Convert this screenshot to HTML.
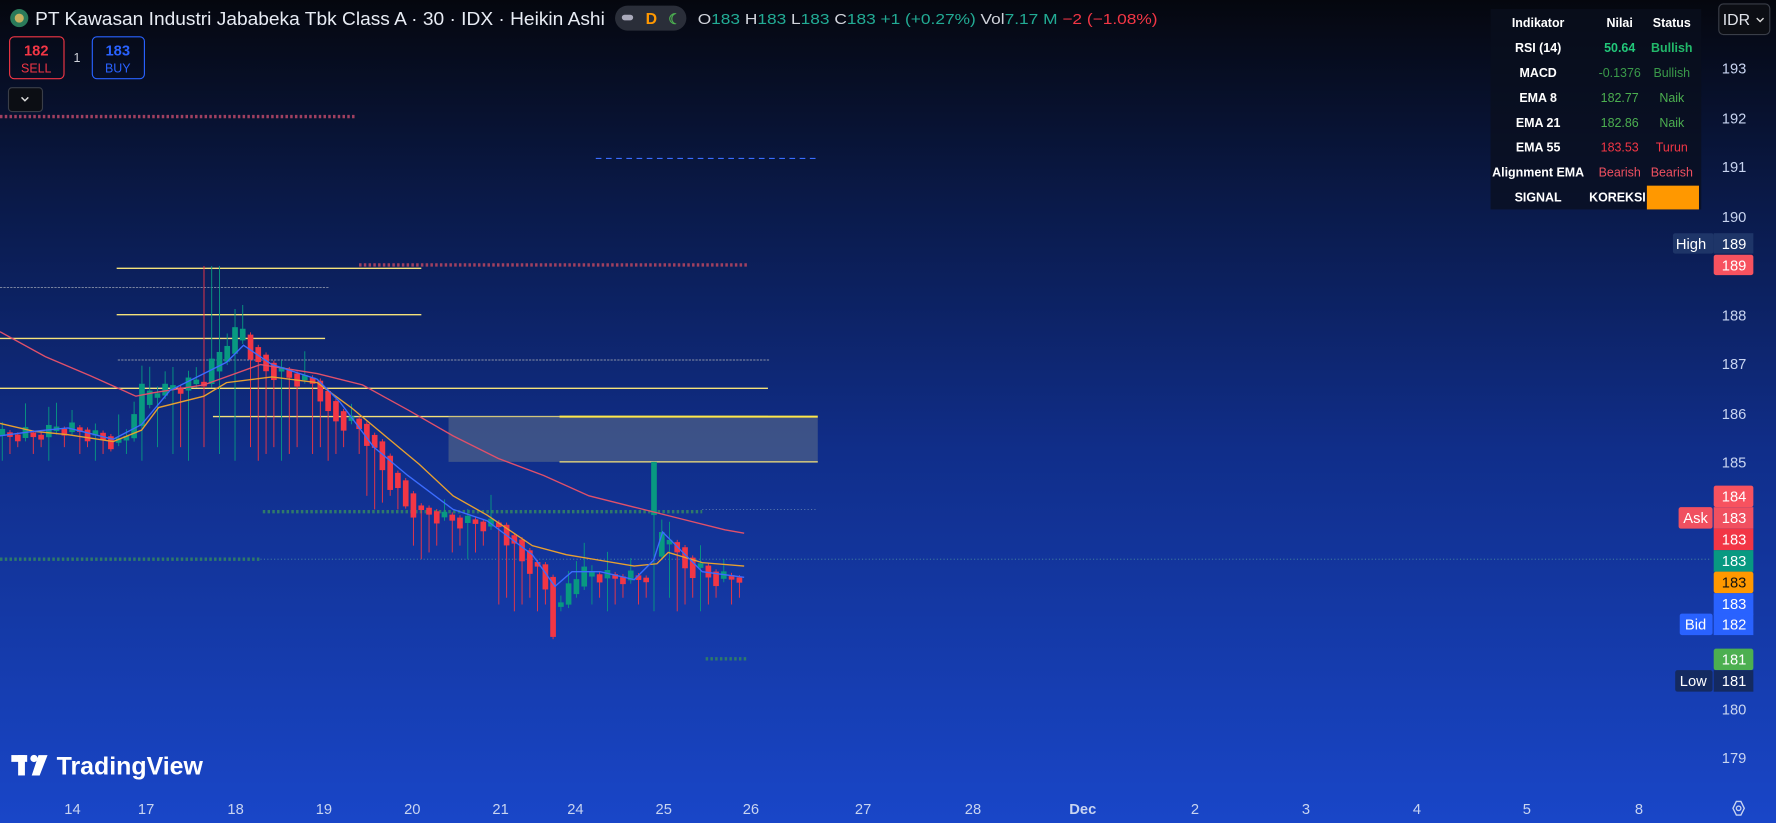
<!DOCTYPE html>
<html><head><meta charset="utf-8"><style>
html,body{margin:0;padding:0;width:1776px;height:823px;overflow:hidden;background:#0a1230}
svg{display:block}
text{font-family:"Liberation Sans",sans-serif}
</style></head><body>
<svg id="s" width="1776" height="823" viewBox="0 0 1568 727" preserveAspectRatio="none" xmlns="http://www.w3.org/2000/svg">
<defs>
<linearGradient id="bg" x1="0" y1="0" x2="0" y2="1">
<stop offset="0" stop-color="#05070e"/>
<stop offset="0.25" stop-color="#0a1a4a"/>
<stop offset="0.55" stop-color="#102e8a"/>
<stop offset="1" stop-color="#1946c8"/>
</linearGradient>
</defs>
<rect width="1568" height="727" fill="url(#bg)"/>
<line x1="0" y1="103" x2="313" y2="103" stroke="#a04060" stroke-width="3" stroke-dasharray="2.2 2"/>
<line x1="317" y1="234" x2="660" y2="234" stroke="#a04060" stroke-width="3" stroke-dasharray="2.2 2"/>
<line x1="526" y1="140" x2="722" y2="140" stroke="#3a6cff" stroke-width="1" stroke-dasharray="5 4"/>
<line x1="103" y1="237" x2="372" y2="237" stroke="#f5e27a" stroke-width="1.2"/>
<line x1="0" y1="254" x2="290" y2="254" stroke="#8890a8" stroke-width="0.8" stroke-dasharray="2 1"/>
<line x1="103" y1="278" x2="372" y2="278" stroke="#f5e27a" stroke-width="1.2"/>
<line x1="0" y1="299" x2="287" y2="299" stroke="#f5e27a" stroke-width="1.2"/>
<line x1="104" y1="318" x2="680" y2="318" stroke="#8890a8" stroke-width="0.8" stroke-dasharray="2 1"/>
<line x1="0" y1="343" x2="678" y2="343" stroke="#f5e27a" stroke-width="1.2"/>
<line x1="188" y1="368" x2="678" y2="368" stroke="#f5e27a" stroke-width="1.2"/>
<rect x="396" y="368" width="326" height="40" fill="#5a6a88" opacity="0.6"/>
<line x1="494" y1="368" x2="722" y2="368" stroke="#ffe84a" stroke-width="1.8"/>
<line x1="494" y1="408" x2="722" y2="408" stroke="#f5e27a" stroke-width="1.2"/>
<line x1="232" y1="452" x2="620" y2="452" stroke="#2f7a6a" stroke-width="3" stroke-dasharray="2.2 2"/>
<line x1="620" y1="450" x2="722" y2="450" stroke="#6080b0" stroke-width="0.8" stroke-dasharray="1 2"/>
<line x1="0" y1="494" x2="230" y2="494" stroke="#2f7a6a" stroke-width="3" stroke-dasharray="2.2 2"/>
<line x1="230" y1="494" x2="1510" y2="494" stroke="#4a8aa0" stroke-width="0.8" stroke-dasharray="1 2"/>
<line x1="623" y1="582" x2="660" y2="582" stroke="#2f7a6a" stroke-width="3" stroke-dasharray="2.2 2"/>
<g id="candles"></g>
<polyline fill="none" stroke="#e0506a" stroke-width="1.2" points="0,293 40,315 80,332 120,350 135,347 180,340 230,322 280,330 320,340 360,362 400,385 440,405 480,420 520,438 560,448 600,458 640,468 657,471"/>
<polyline fill="none" stroke="#e8a030" stroke-width="1.2" points="0,374 30,381 60,384 100,390 125,380 140,360 180,350 200,338 240,333 280,338 310,360 340,385 370,410 400,438 430,455 470,482 500,490 530,495 560,500 580,498 590,488 620,497 657,500"/>
<polyline fill="none" stroke="#3b6cff" stroke-width="1.2" points="0,385 30,381 60,378 100,388 125,375 150,345 200,320 215,305 240,322 280,335 300,355 330,395 360,420 400,450 430,460 470,490 490,518 505,505 530,505 560,512 577,495 585,470 600,485 620,505 657,510"/>
<g font-size="13" fill="#c8d4f0" text-anchor="middle">
<text x="1531" y="65">193</text><text x="1531" y="109">192</text><text x="1531" y="152">191</text><text x="1531" y="196">190</text>
<text x="1531" y="283">188</text><text x="1531" y="326">187</text><text x="1531" y="370">186</text><text x="1531" y="413">185</text>
<text x="1531" y="631">180</text><text x="1531" y="674">179</text>
</g>
<g font-size="13" text-anchor="middle">
<rect x="1477" y="206" width="36" height="18" rx="2" fill="#1e3568"/><text x="1493" y="220" fill="#fff">High</text>
<rect x="1513" y="206" width="35" height="18" fill="#1e3568"/><text x="1531" y="220" fill="#fff">189</text>
<rect x="1513" y="225" width="35" height="18" rx="2" fill="#f7525f"/><text x="1531" y="239" fill="#fff">189</text>
<rect x="1513" y="429" width="35" height="19" rx="2" fill="#f7525f"/><text x="1531" y="443" fill="#fff">184</text>
<rect x="1482" y="448" width="30" height="19" rx="2" fill="#f05060"/><text x="1497" y="462" fill="#fff">Ask</text>
<rect x="1513" y="448" width="35" height="19" fill="#f05060"/><text x="1531" y="462" fill="#fff">183</text>
<rect x="1513" y="467" width="35" height="19" fill="#f23645"/><text x="1531" y="481" fill="#fff">183</text>
<rect x="1513" y="486" width="35" height="19" fill="#089981"/><text x="1531" y="500" fill="#fff">183</text>
<rect x="1513" y="505" width="35" height="19" rx="2" fill="#ff9800"/><text x="1531" y="519" fill="#111">183</text>
<rect x="1513" y="524" width="35" height="19" fill="#2962ff"/><text x="1531" y="538" fill="#fff">183</text>
<rect x="1483" y="542" width="29" height="19" rx="2" fill="#2962ff"/><text x="1497" y="556" fill="#fff">Bid</text>
<rect x="1513" y="542" width="35" height="19" fill="#2962ff"/><text x="1531" y="556" fill="#fff">182</text>
<rect x="1513" y="573" width="35" height="19" rx="2" fill="#4caf50"/><text x="1531" y="587" fill="#fff">181</text>
<rect x="1479" y="592" width="33" height="19" rx="2" fill="#142a60"/><text x="1495" y="606" fill="#fff">Low</text>
<rect x="1513" y="592" width="35" height="19" fill="#142a60"/><text x="1531" y="606" fill="#fff">181</text>
</g>
<g fill="none" stroke="#c8d4f0" stroke-width="1.2"><polygon points="1533,708 1537,708 1540,714 1537,720 1533,720 1530,714"/><circle cx="1535" cy="714" r="2"/></g>
<g font-size="13" fill="#c8d4f0" text-anchor="middle">
<text x="64" y="719">14</text><text x="129" y="719">17</text><text x="208" y="719">18</text><text x="286" y="719">19</text><text x="364" y="719">20</text><text x="442" y="719">21</text><text x="508" y="719">24</text><text x="586" y="719">25</text><text x="663" y="719">26</text><text x="762" y="719">27</text><text x="859" y="719">28</text><text x="956" y="719" font-weight="bold">Dec</text><text x="1055" y="719">2</text><text x="1153" y="719">3</text><text x="1251" y="719">4</text><text x="1348" y="719">5</text><text x="1447" y="719">8</text>
</g>
<circle cx="17" cy="16" r="8" fill="#2a7a5a"/><circle cx="17" cy="16" r="4" fill="#c8b060"/>
<text x="31" y="22" font-size="16" fill="#e8ecf4" textLength="503" lengthAdjust="spacingAndGlyphs">PT Kawasan Industri Jababeka Tbk Class A · 30 · IDX · Heikin Ashi</text>
<rect x="543" y="5" width="63" height="22" rx="11" fill="#2a2e39"/>
<rect x="549" y="13" width="10" height="5" rx="2.5" fill="#aab"/>
<text x="570" y="21" font-size="14" fill="#ff9800" font-weight="bold">D</text>
<text x="590" y="21" font-size="13" fill="#4caf50" font-weight="bold">☾</text>
<text x="616" y="21" font-size="13" fill="#d1d4dc" textLength="406" lengthAdjust="spacingAndGlyphs">O<tspan fill="#22ab94">183</tspan> H<tspan fill="#22ab94">183</tspan> L<tspan fill="#22ab94">183</tspan> C<tspan fill="#22ab94">183 +1 (+0.27%)</tspan> <tspan fill="#d1d4dc">Vol</tspan><tspan fill="#22ab94">7.17 M</tspan> <tspan fill="#f23645">−2 (−1.08%)</tspan></text>
<rect x="8.5" y="32.5" width="48" height="37" rx="4" fill="none" stroke="#f23645"/>
<text x="32" y="49" font-size="13" fill="#f23645" text-anchor="middle" font-weight="bold">182</text><text x="32" y="64" font-size="11" fill="#f23645" text-anchor="middle">SELL</text>
<text x="68" y="55" font-size="11" fill="#d1d4dc" text-anchor="middle">1</text>
<rect x="81.5" y="32.5" width="46" height="37" rx="4" fill="none" stroke="#2962ff"/>
<text x="104" y="49" font-size="13" fill="#2962ff" text-anchor="middle" font-weight="bold">183</text><text x="104" y="64" font-size="11" fill="#2962ff" text-anchor="middle">BUY</text>
<rect x="7.5" y="77.5" width="30" height="21" rx="3" fill="#0c0e14" stroke="#3a3e48"/>
<polyline points="19,86 22,89 25,86" fill="none" stroke="#ddd" stroke-width="1.3"/>
<rect x="1517.5" y="3.5" width="45" height="27" rx="4" fill="#0c0e14" stroke="#3a3e48"/>
<text x="1521" y="22" font-size="14" fill="#e0e3ea">IDR</text><polyline points="1551,16 1554,19 1557,16" fill="none" stroke="#ddd" stroke-width="1.2"/>
<rect x="1316" y="8" width="186" height="177" fill="#0a0f1e" opacity="0.75"/>
<g font-size="11" text-anchor="middle" font-weight="bold">
<text x="1358" y="24" fill="#fff">Indikator</text><text x="1430" y="24" fill="#fff">Nilai</text><text x="1476" y="24" fill="#fff">Status</text>
<text x="1358" y="46" fill="#fff">RSI (14)</text><text x="1430" y="46" fill="#22c77a">50.64</text><text x="1476" y="46" fill="#22b86a">Bullish</text>
<text x="1358" y="68" fill="#fff">MACD</text><text x="1430" y="68" fill="#3a9a4a" font-weight="normal">-0.1376</text><text x="1476" y="68" fill="#3a9a4a" font-weight="normal">Bullish</text>
<text x="1358" y="90" fill="#fff">EMA 8</text><text x="1430" y="90" fill="#4caf50" font-weight="normal">182.77</text><text x="1476" y="90" fill="#4caf50" font-weight="normal">Naik</text>
<text x="1358" y="112" fill="#fff">EMA 21</text><text x="1430" y="112" fill="#4caf50" font-weight="normal">182.86</text><text x="1476" y="112" fill="#4caf50" font-weight="normal">Naik</text>
<text x="1358" y="134" fill="#fff">EMA 55</text><text x="1430" y="134" fill="#f23645" font-weight="normal">183.53</text><text x="1476" y="134" fill="#f23645" font-weight="normal">Turun</text>
<text x="1358" y="156" fill="#fff">Alignment EMA</text><text x="1430" y="156" fill="#f05060" font-weight="normal">Bearish</text><text x="1476" y="156" fill="#f05060" font-weight="normal">Bearish</text>
<text x="1358" y="178" fill="#fff">SIGNAL</text><text x="1428" y="178" fill="#fff">KOREKSI</text>
</g>
<rect x="1454" y="164" width="46" height="21" fill="#ff9800"/>
<g fill="#fff"><rect x="10" y="667" width="14" height="6"/><rect x="16" y="667" width="6" height="18"/><circle cx="30" cy="670" r="3.2"/><polygon points="34,667 42,667 35,685 28,685"/></g>
<text x="50" y="684" font-size="22" font-weight="bold" fill="#fff">TradingView</text>
</svg>
<script>
(function(){
var NS="http://www.w3.org/2000/svg";
var kp=[[0,385],[40,382],[60,378],[90,388],[110,395],[122,345],[150,345],[180,335],[200,300],[215,290],[225,325],[260,335],[280,340],[290,370],[320,380],[340,420],[360,450],[400,460],[440,465],[460,495],[480,510],[487,560],[495,540],[505,505],[540,510],[570,510],[579,470],[590,470],[600,500],[630,512],[657,508]];
function py(x){for(var i=0;i<kp.length-1;i++){if(x<=kp[i+1][0]){var t=(x-kp[i][0])/(kp[i+1][0]-kp[i][0]);return kp[i][1]+t*(kp[i+1][1]-kp[i][1]);}}return kp[kp.length-1][1];}
function floor(x){if(x<180)return 407;if(x<320)return 407;if(x<360)return 450;if(x<440)return 494;return 540;}
var g=document.getElementById('candles');
function el(n,a){var e=document.createElementNS(NS,n);for(var k in a)e.setAttribute(k,String(a[k]));g.appendChild(e);}
var prev=py(0);
for(var n=0;n<96;n++){
 var x=2+n*6.85;
 var c=py(x)+((n%3)-1)*6;
 var o=prev;
 var up=c<o;
 if(Math.abs(c-o)<4){c=o+(up?-4:4);}
 var col=up?'#089981':'#f23645';
 var top=Math.min(o,c),bot=Math.max(o,c);
 var wt=up?top-6-(n%4)*5:top-2;
 var wb=Math.max(bot+2,floor(x)-((n*13)%3)*6);
 if(up && n%2) wb=bot+3;
 if(x>180&&x<195){wt=235;}
 if(x>575&&x<582){top=408;bot=455;wt=408;wb=540;col='#089981';}
 el('line',{x1:x.toFixed(1),x2:x.toFixed(1),y1:wt.toFixed(1),y2:wb.toFixed(1),stroke:col,'stroke-width':0.8});
 el('rect',{x:(x-2.5).toFixed(1),y:top.toFixed(1),width:5,height:Math.max(2,bot-top).toFixed(1),fill:col});
 prev=(o+c)/2;
}
})();
</script>
</body></html>
